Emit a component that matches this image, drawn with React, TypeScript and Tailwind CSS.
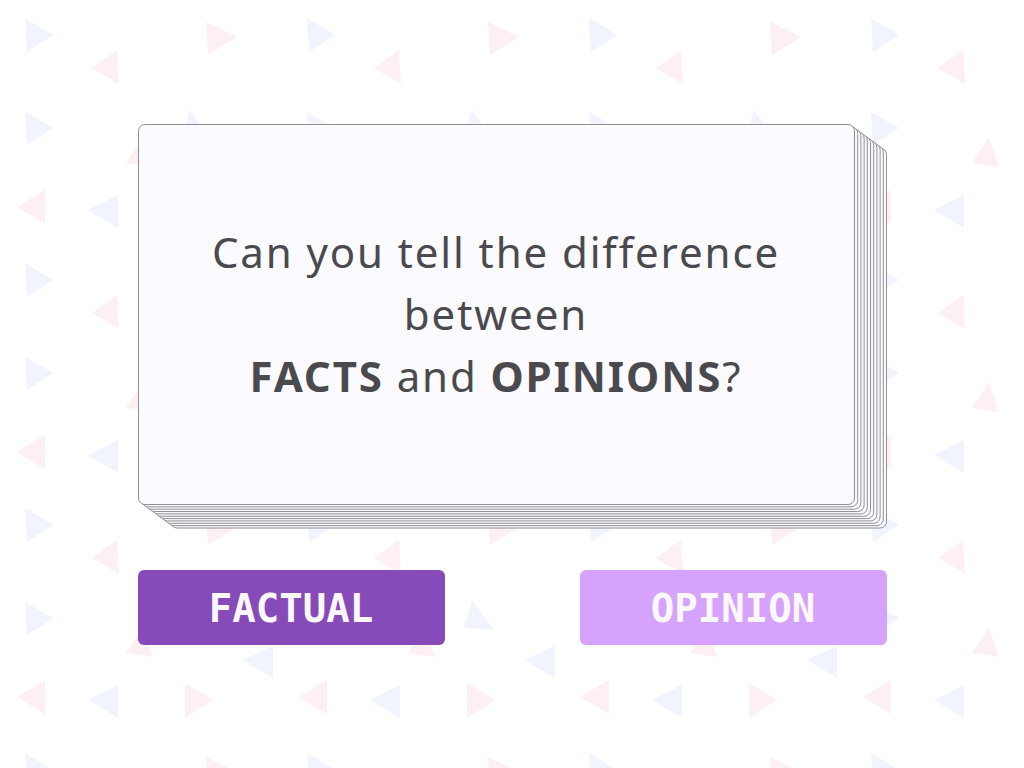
import React from "react";

const PINK = "#fdf0f2";
const BLUE = "#f1f4fc";

function Background() {
  return (
    <svg className="absolute inset-0 h-full w-full" aria-hidden="true">
      <defs>
        <pattern id="tri" width="282" height="245" patternUnits="userSpaceOnUse">
          <polygon points="25,18 53,35 27,52" fill={BLUE} />
          <polygon points="92,68 117,50 119,84" fill={PINK} />
          <polygon points="206,22 237,37 208,55" fill={PINK} />
          <polygon points="25,112 53,128 27,145" fill={BLUE} />
          <polygon points="190,110 212,140 182,138" fill={BLUE} />
          <polygon points="143,137 153,167 126,163" fill={PINK} />
          <polygon points="243,170 273,156 273,188" fill={BLUE} />
          <polygon points="17,207 45,190 45,224" fill={PINK} />
          <polygon points="88,210 118,195 118,228" fill={BLUE} />
          <polygon points="185,193 213,210 185,228" fill={PINK} />
        </pattern>
      </defs>
      <rect width="100%" height="100%" fill="#ffffff" />
      <rect width="100%" height="100%" fill="url(#tri)" />
    </svg>
  );
}

const backCards = [10, 9, 8, 7, 6, 5, 4, 3, 2, 1];

export default function App() {
  return (
    <div
      className="relative flex h-screen w-full items-center justify-center overflow-hidden bg-white"
      style={{ fontFamily: '"Noto Sans", "Open Sans", sans-serif' }}
    >
      <Background />
      <div className="relative flex w-[749px] flex-col gap-[42px]">
        <div className="relative h-[404px] w-full">
          {backCards.map((i) => (
            <div
              key={i}
              className="absolute left-0 top-0 h-[381px] w-[717px] rounded-[7px] border border-[#8e8e93] bg-[#fbfaff]"
              style={{ transform: `translate(${i * 3.2}px, ${i * 2.35}px)` }}
            />
          ))}
          <div className="relative z-10 flex h-[381px] w-[717px] items-center justify-center rounded-[7px] border border-[#8e8e93] bg-[#fbfaff]">
            <p className="text-center text-[42px] leading-[62px] tracking-[0.045em] text-[#4a4a4e]">
              Can you tell the difference
              <br />
              between
              <br />
              <span className="font-bold">FACTS</span> and{" "}
              <span className="font-bold">OPINIONS</span>?
            </p>
          </div>
        </div>
        <div
          className="flex w-full items-center justify-between"
          style={{ fontFamily: '"DejaVu Sans Mono", "Liberation Mono", monospace' }}
        >
          <button className="flex h-[75px] w-[307px] items-center justify-center rounded-[6px] bg-[#864bb8] pt-[5px] text-[39px] font-bold text-[#fdf7ff]">
            FACTUAL
          </button>
          <button className="flex h-[75px] w-[307px] items-center justify-center rounded-[6px] bg-[#d6a3fc] pt-[5px] text-[39px] font-bold text-[#fdf7ff]">
            OPINION
          </button>
        </div>
      </div>
    </div>
  );
}
